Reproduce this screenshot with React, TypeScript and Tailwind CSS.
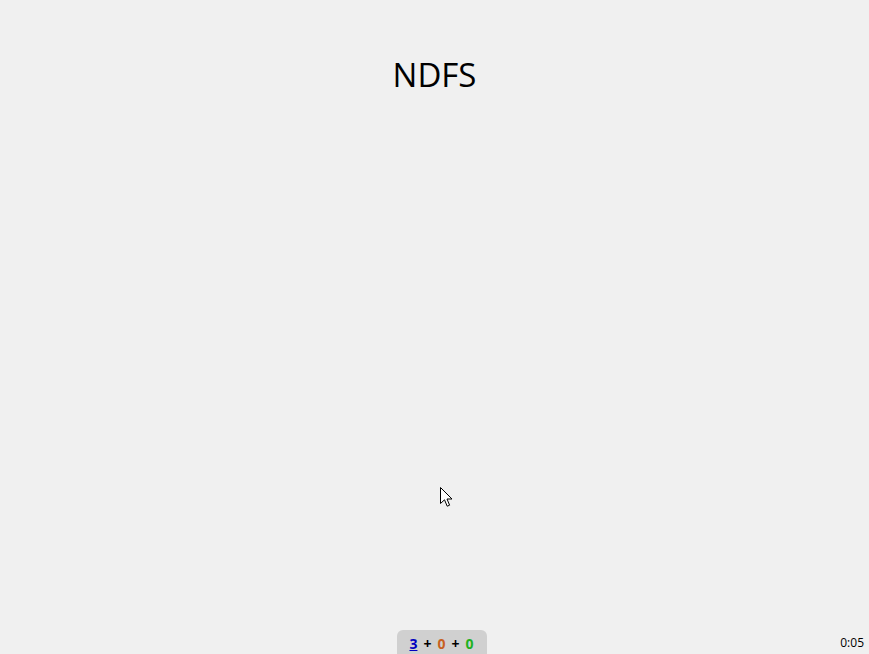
export default function App() {
  return (
    <div
      className="relative flex h-[654px] w-full flex-col items-center bg-[#f0f0f0] text-black"
      style={{ fontFamily: '"Open Sans", "Noto Sans", sans-serif' }}
    >
      <h1 className="mt-[53px] text-[33px] leading-[44px] font-normal">NDFS</h1>

      <div className="flex-grow" />

      {/* score badge */}
      <div className="ml-[14px] flex h-[24px] w-[90px] items-center justify-center gap-[6px] rounded-t-[6px] bg-[#d0d0d0] pt-[3px] text-[14px] font-bold">
        <a href="#" className="text-[#0000c0] underline">3</a>
        <span>+</span>
        <span className="text-[#c8601e]">0</span>
        <span>+</span>
        <span className="text-[#20b020]">0</span>
      </div>

      <span className="absolute right-[5px] bottom-[2px] text-[12px]">0:05</span>

      {/* mouse pointer */}
      <svg className="absolute left-[440px] top-[487px]" width="13" height="21" viewBox="0 0 13 21">
        <path
          d="M0.5 0.5 L0.5 16.5 L4.5 12.8 L7.2 19.2 L9.6 18.2 L7 12 L12 12 Z"
          fill="#fff"
          stroke="#000"
          strokeWidth="1"
          strokeLinejoin="miter"
        />
      </svg>
    </div>
  );
}
